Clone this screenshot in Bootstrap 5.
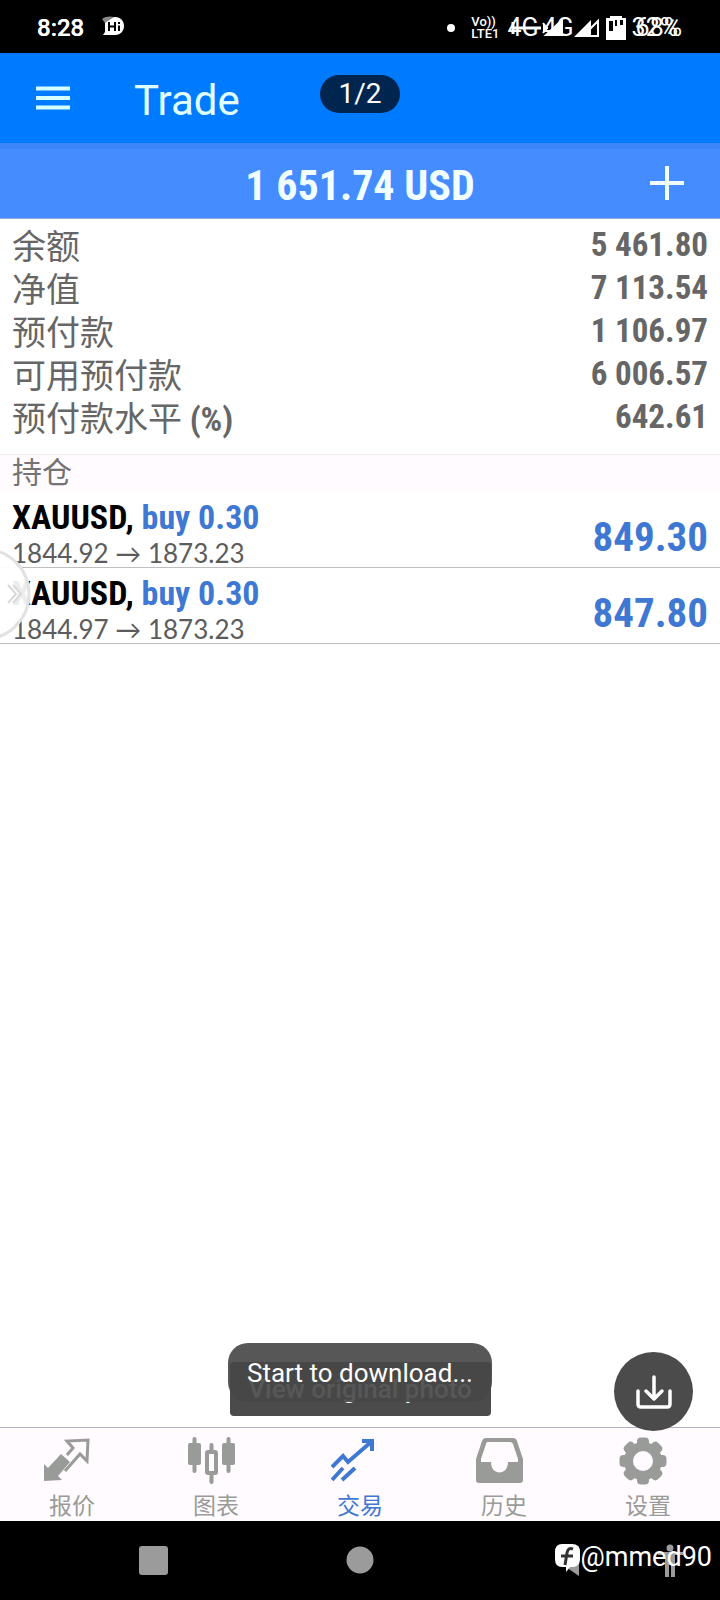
<!DOCTYPE html>
<html lang="zh-CN">
<head>
<meta charset="utf-8">
<meta name="viewport" content="width=device-width, initial-scale=1">
<title>Trade</title>
<link href="https://cdn.jsdelivr.net/npm/bootstrap@5.3.0/dist/css/bootstrap.min.css" rel="stylesheet">
<style>
  body { font-family: Roboto, "Noto Sans CJK SC", sans-serif; background: #fff; overflow-x: hidden; }
  svg { display: block; flex: none; }
  .narrow { font-family: "Roboto Condensed", "Liberation Sans", sans-serif; font-weight: 700; }
  .status-bar { height: 53px; padding: 2px 38px 0 37px; }
  .stacked { display: grid; line-height: 28px; }
  .stacked > span { grid-area: 1 / 1; }
  .clock { font-size: 24px; font-weight: 500; }
  .notice { margin-left: 18px; }
  .net { font-size: 25px; }
  .volte { font-size: 13px; font-weight: 500; line-height: 12px; }
  .app-bar { height: 90px; background: #007aff; padding: 0 36px; color: #e0ffff; }
  .app-title { font-size: 42px; line-height: 48px; font-weight: 400; padding-top: 5px; margin-left: 64px; }
  .page-pill { top: 22px; height: 38px; width: 80px; background: #00264f; font-size: 28px; line-height: 38px; }
  .account-bar { height: 76px; background: #448cff; border-top: 6px solid #3c85f6; border-bottom: 1px solid #8eaed8; color: #f2ffff; }
  .account-sum { font-size: 42px; line-height: 70px; padding-top: 2px; }
  .add-btn { right: 35px; top: 16px; color: #f2ffff; }
  .totals { padding: 4px 12px 16px; color: #666; font-size: 34px; line-height: 43px; }
  .totals dt { font-weight: 400; font-family: "Noto Sans CJK SC", sans-serif; }
  .totals dd { font-size: 33px; line-height: 43px; }
  .totals dt span { line-height: 34px; }
  .section-head { background: #fffbff; border-top: 1px solid #f1edf1; color: #737373; font: 400 30px/30px "Noto Sans CJK SC", sans-serif; padding: 0 12px 7px; }
  .deal { height: 76px; padding: 6px 12px 0; border-bottom: 1px solid #bebebe; }
  .deal-name { font-size: 34px; line-height: 38px; color: #000; }
  .deal-price { font: 400 26px/35px Lato, sans-serif; color: #5c5c5c; }
  .deal-profit { font-size: 41px; line-height: 78px; }
  .blue { color: #3f78d2; }
  .edge { left: 0; top: 548px; }
  .toasts { bottom: 11px; left: 0; right: 0; }
  .toast-back { width: 261px; height: 54px; border-radius: 4px; background: #4b4b4b; color: #fff; font-size: 26px; font-weight: 500; line-height: 54px; }
  .toast-front { width: 264px; height: 59px; bottom: 14px; left: 50%; transform: translateX(-50%); border-radius: 20px; background: rgba(70,70,70,.91); color: #fff; font-size: 26px; line-height: 61px; }
  .fab { width: 79px; height: 79px; right: 27px; bottom: -4px; background: #4b4b4b; z-index: 3; }
  .tabs { border-top: 1px solid #b4b0be; background: #fffbff; height: 94px; }
  .tabs a { color: #999b98; text-decoration: none; font: 400 23px/30px "Noto Sans CJK SC", sans-serif; padding-top: 9px; }
  .tabs a.on { color: #3f78d2; }
  .tabs svg { margin: 0 10px 4px 0; }
  .system-nav { height: 79px; }
  .handle { font-size: 27px; line-height: 34px; }
  .mark-row { right: 8px; top: 19px; }
</style>
</head>
<body class="d-flex flex-column min-vh-100 position-relative">

<div class="status-bar bg-black text-white d-flex align-items-center justify-content-between">
  <div class="d-flex align-items-center">
    <div class="stacked clock"><span>8:23</span><span>8:28</span></div>
    <svg class="notice" width="24" height="24" viewBox="0 0 24 24"><path d="M3 5q4-4 10-4c12 0 12 18 0 18H1l2-3z" fill="#fff"/><path d="M0 3c3-3 9-3 12-2L3 7z" fill="#888"/><path d="M7 6v9M13 6v9M7 10.500h6M17 9.500V15M17 6v2" stroke="#000" stroke-width="2"/></svg>
  </div>
  <div class="d-flex align-items-center">
    <svg width="8" height="8"><circle cx="4" cy="4" r="4" fill="#fff"/></svg>
    <div class="volte ms-3"><div>Vo))</div><div>LTE1</div></div>
    <div class="net d-flex align-items-center ms-2">
      <div class="stacked"><span>4G</span></div>
      <svg class="position-relative" width="4" height="24" viewBox="0 0 4 24" overflow="visible"><path d="M-24 12H0M-25 6v12M-10 12H3" stroke="#fff" stroke-width="3"/><path d="M5 12h5M5 7l4 5-4 5M8 19 24 4v15z" stroke="#fff" stroke-width="2" fill="#fff"/></svg>
      <div class="stacked position-relative"><span>4G</span></div>
      <svg width="26" height="20" viewBox="0 0 26 20"><path d="M0 19 17 2v17z" fill="#fff"/><path d="M9 18 24 3v15z" fill="none" stroke="#fff" stroke-width="2"/></svg>
      <svg class="ms-1" width="24" height="26" viewBox="0 0 24 26"><path d="M2 3h4V1h12v2h4v22H2z" fill="#fff"/><path d="M5 6h4v10H5zM11 5h2v6h-2zM16 5h3v5h-3z" fill="#000"/></svg>
      <div class="stacked ms-1"><span>32%</span><span class="ps-1">68%</span></div>
    </div>
  </div>
</div>

<header class="app-bar d-flex align-items-center position-relative">
  <button class="btn p-0 border-0" type="button" aria-label="Menu">
    <svg width="34" height="24" viewBox="0 0 34 24"><path d="M0 2.500h34M0 12h34M0 21.500h34" stroke="#d4ffff" stroke-width="4"/></svg>
  </button>
  <h1 class="app-title mb-0">Trade</h1>
  <div class="page-pill position-absolute start-50 translate-middle-x rounded-pill text-center text-white">1/2</div>
</header>

<div class="account-bar position-relative text-center">
  <div class="account-sum narrow">1 651.74 USD</div>
  <button class="add-btn btn p-0 border-0 position-absolute" type="button" aria-label="Add">
    <svg width="36" height="36" viewBox="0 0 36 36"><path d="M1 18h34M18 1v34" stroke="currentColor" stroke-width="4"/></svg>
  </button>
</div>

<main class="flex-grow-1 position-relative">
  <dl class="totals mb-0">
    <div class="d-flex justify-content-between"><dt>余额</dt><dd class="narrow mb-0">5 461.80</dd></div>
    <div class="d-flex justify-content-between"><dt>净值</dt><dd class="narrow mb-0">7 113.54</dd></div>
    <div class="d-flex justify-content-between"><dt>预付款</dt><dd class="narrow mb-0">1 106.97</dd></div>
    <div class="d-flex justify-content-between"><dt>可用预付款</dt><dd class="narrow mb-0">6 006.57</dd></div>
    <div class="d-flex justify-content-between"><dt>预付款水平 <span class="narrow">(%)</span></dt><dd class="narrow mb-0">642.61</dd></div>
  </dl>
  <h2 class="section-head mb-0">持仓</h2>
  <div class="deal d-flex justify-content-between">
    <div>
      <div class="deal-name narrow">XAUUSD, <span class="blue">buy 0.30</span></div>
      <div class="deal-price">1844.92 → 1873.23</div>
    </div>
    <div class="deal-profit narrow blue">849.30</div>
  </div>
  <div class="deal d-flex justify-content-between">
    <div>
      <div class="deal-name narrow">XAUUSD, <span class="blue">buy 0.30</span></div>
      <div class="deal-price">1844.97 → 1873.23</div>
    </div>
    <div class="deal-profit narrow blue">847.80</div>
  </div>

  <div class="toasts position-absolute text-center">
    <div class="toast-back mx-auto">View original photo</div>
    <div class="toast-front position-absolute">Start to download...</div>
  </div>
  <button class="fab btn rounded-circle border-0 p-0 position-absolute d-flex align-items-center justify-content-center" type="button" aria-label="Download">
    <svg width="36" height="36" viewBox="0 0 36 36" fill="none" stroke="#fff" stroke-width="3.500" stroke-linecap="round" stroke-linejoin="round"><path d="M2 17v13q0 3 3 3h26q3 0 3-3V17M18 3v22M10 17l8 8 8-8"/></svg>
  </button>
</main>

<svg class="edge position-absolute" width="34" height="92" viewBox="0 0 34 92"><circle cx="-16" cy="46" r="45" fill="#fff" fill-opacity=".93" stroke="#e2e2e2" stroke-width="3"/><path d="m8 37 8 9-8 9M13 37l8 9-8 9" fill="none" stroke="#d8d8d8" stroke-width="2"/></svg>

<nav class="tabs d-flex">
  <a href="#" class="d-flex flex-column align-items-center flex-fill w-25">
    <svg width="48" height="48" viewBox="0 0 48 48"><path d="M1 44V27l4 4 13-14 9 8-12 14 4 4z" fill="currentColor"/><path d="m24 18 6-7-6-7 21-1-1 21-7-7-15 17" fill="none" stroke="currentColor" stroke-width="3"/></svg>报价</a>
  <a href="#" class="d-flex flex-column align-items-center flex-fill w-25">
    <svg width="48" height="48" viewBox="0 0 48 48" fill="currentColor"><rect x="1" y="6" width="13" height="22" rx="2"/><rect x="35" y="6" width="13" height="22" rx="2"/><path d="M7.500 2v32M41.500 2v32M24.500 8v6M24.500 37v8" stroke="currentColor" stroke-width="4" stroke-linecap="round"/><rect x="20" y="15" width="9" height="21" fill="none" stroke="currentColor" stroke-width="4" rx="1"/></svg>图表</a>
  <a href="#" class="on d-flex flex-column align-items-center flex-fill w-25" aria-current="page">
    <svg width="48" height="48" viewBox="0 0 48 48" fill="none" stroke="currentColor" stroke-width="4"><path d="M1 30 12 19l5 6L40 5M31 4h10v10M1 43l11-12M11 43l13-12"/></svg>交易</a>
  <a href="#" class="d-flex flex-column align-items-center flex-fill w-25">
    <svg width="48" height="48" viewBox="0 0 48 48"><path fill="currentColor" fill-rule="evenodd" d="M11 1h27q3 0 4 3l6 18v21q0 3-3 3H4q-3 0-3-3V22L7 4q1-3 4-3zM13 5q-2 0-2 2L6 22v3h10c0 14 17 14 17 0h10v-3L38 7q-1-2-3-2z"/></svg>历史</a>
  <a href="#" class="d-flex flex-column align-items-center flex-fill w-25">
    <svg width="48" height="48" viewBox="-24 -24 48 48" fill="currentColor"><circle r="14.500" fill="none" stroke="currentColor" stroke-width="9"/><g id="teeth"><rect x="-6" y="-23.500" width="12" height="12" rx="4"/><rect x="-6" y="11.500" width="12" height="12" rx="4"/><rect x="-23.500" y="-6" width="12" height="12" rx="4"/><rect x="11.500" y="-6" width="12" height="12" rx="4"/></g><use href="#teeth" transform="rotate(45)"/></svg>设置</a>
</nav>

<footer class="system-nav bg-black position-relative d-flex justify-content-center align-items-center">
  <svg class="w-100" height="79" viewBox="0 0 720 79"><g fill="#9b9b9b"><rect x="139" y="25" width="29" height="29" rx="3"/><circle cx="360" cy="39" r="13.500"/><path d="M579 25v30l-22-15z"/><circle cx="670" cy="27" r="3.500"/><path d="M658 31h25v3h-8v22h-4V44h-2v12h-4V34h-7z"/></g></svg>
  <div class="mark-row position-absolute d-flex align-items-center text-white">
    <svg width="27" height="32" viewBox="0 0 27 32"><path d="M8 3h10q8 0 8 8v7q0 8-8 8h-2l-4 5v-5H8q-7 0-7-8v-7q0-8 7-8z" fill="#fff"/><path d="M19 8q-5-2-6 4l-2 12M7 15h12" fill="none" stroke="#333" stroke-width="3"/></svg>
    <span class="handle">@mmed90</span>
  </div>
</footer>

<script src="https://cdn.jsdelivr.net/npm/bootstrap@5.3.0/dist/js/bootstrap.bundle.min.js"></script>
</body>
</html>
